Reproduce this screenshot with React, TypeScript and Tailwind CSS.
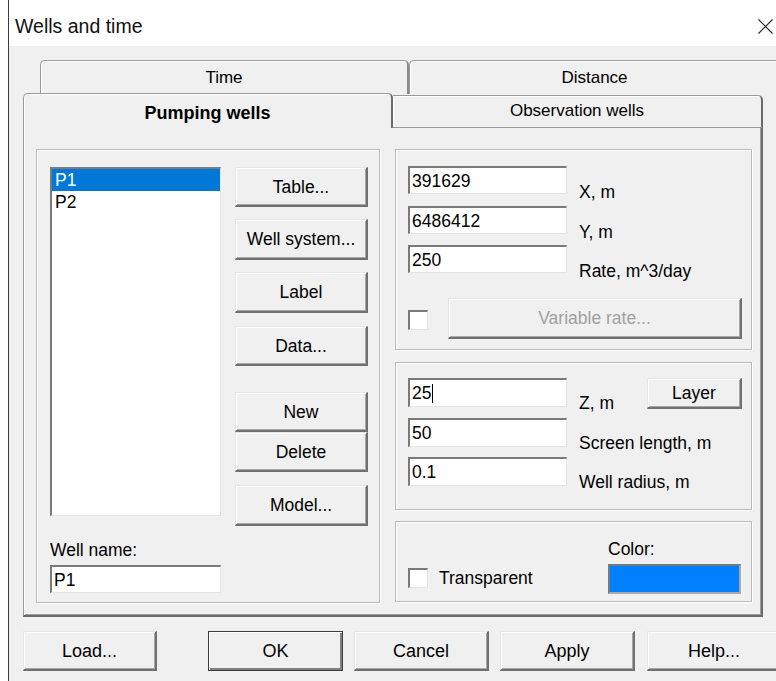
import React from 'react';
import clsx from 'clsx';

// classic raised / sunken bevels
const raised =
  'border-solid border-t border-l border-r-2 border-b-2 border-t-[#e6e6e6] border-l-[#e6e6e6] border-r-[#707070] border-b-[#707070] shadow-[inset_1px_1px_0_#ffffff,inset_-1px_-1px_0_#a8a8a8]';
const sunken =
  'border-solid border-t-2 border-l-2 border-r border-b border-t-[#7a7a7a] border-l-[#7a7a7a] border-r-[#e3e3e3] border-b-[#e3e3e3] bg-white';
const etched = 'border border-solid border-[#b9b9b9] shadow-[inset_1px_1px_0_#ffffff,1px_1px_0_#ffffff]';

const Button = ({
  label,
  className,
  disabled,
  isDefault,
}: {
  label: string;
  className?: string;
  disabled?: boolean;
  isDefault?: boolean;
}) => (
  <div
    className={clsx(
      'box-border flex shrink-0 items-center justify-center bg-[#f0f0f0] leading-[20px]',
      isDefault
        ? 'border border-solid border-[#3c3c3c] shadow-[inset_1px_1px_0_#ffffff,inset_-2px_-2px_0_#808080]'
        : raised,
      disabled ? 'text-[#a0a0a0]' : 'text-black',
      className
    )}
  >
    {label}
  </div>
);

const TextBox = ({ value, className, caret }: { value: string; className?: string; caret?: boolean }) => (
  <div className={clsx('box-border flex shrink-0 items-center pl-[2px] leading-[20px]', sunken, className)}>
    <span>{value}</span>
    {caret && <span className="ml-px inline-block h-[19px] w-px bg-black" />}
  </div>
);

const CheckBox = ({ className }: { className?: string }) => (
  <div className={clsx('box-border h-[20px] w-[20px] shrink-0', sunken, className)} />
);

const Field = ({
  value,
  label,
  gapTop,
  h = 'h-[28px]',
  labelTop = 'mt-[16px]',
  caret,
  children,
}: {
  value: string;
  label: string;
  gapTop: string;
  h?: string;
  labelTop?: string;
  caret?: boolean;
  children?: React.ReactNode;
}) => (
  <div className={clsx('flex items-start', h, gapTop)}>
    <TextBox value={value} caret={caret} className={clsx('w-[159px]', h)} />
    <span className={clsx('ml-[12px] leading-[20px] whitespace-nowrap', labelTop)}>{label}</span>
    {children}
  </div>
);

const BackTab = ({ label, className }: { label: string; className?: string }) => (
  <div
    className={clsx(
      'box-border flex h-[34px] shrink-0 justify-center rounded-t-[5px] border-solid border-t border-l border-r-2 border-t-[#9a9a9a] border-l-[#9a9a9a] border-r-[#8a8a8a] bg-[#f0f0f0] pt-[7px] leading-[20px] shadow-[inset_1px_1px_0_#ffffff]',
      className
    )}
  >
    {label}
  </div>
);

export default function App() {
  return (
    <div className="flex h-[681px] w-[776px] overflow-hidden bg-white font-['Liberation_Sans',Arial,sans-serif] text-[17.5px] text-black">
      <div className="w-[8px] shrink-0 bg-white" />
      <div className="w-px shrink-0 bg-[#3a3a3a]" />
      <div className="flex min-w-0 flex-1 flex-col">
        {/* title bar */}
        <div className="flex h-[46px] shrink-0 items-center bg-white pl-[6px] pt-[6px]">
          <span className="text-[19.5px] leading-[24px] text-[#111]">Wells and time</span>
          <svg className="ml-auto mr-[3px]" width="15" height="15" viewBox="0 0 15 15">
            <path d="M0.5 0.5 L14.5 14.5 M14.5 0.5 L0.5 14.5" stroke="#222" strokeWidth="1.1" fill="none" />
          </svg>
        </div>

        <div className="flex flex-1 flex-col bg-[#f0f0f0] pt-[14px]">
          {/* back row of tabs */}
          <div className="ml-[31px] flex h-[33px] overflow-visible">
            <BackTab label="Time" className="w-[369px] text-[17px]" />
            <BackTab label="Distance" className="w-[372px] text-[17px]" />
          </div>

          {/* front row of tabs */}
          <div className="relative z-10 ml-[14px] flex h-[34px] items-start">
            <div className="box-border flex h-[35px] w-[370px] shrink-0 justify-center rounded-t-[5px] border-solid border-t border-l border-r-2 border-t-[#9a9a9a] border-l-[#9a9a9a] border-r-[#6a6a6a] bg-[#f0f0f0] pt-[8px] text-[18px] font-bold leading-[22px] shadow-[inset_1px_1px_0_#ffffff]">
              Pumping wells
            </div>
            <div className="box-border mt-[2px] flex h-[33px] w-[370px] shrink-0 justify-center rounded-tr-[5px] border-solid border-t border-r-2 border-b border-t-[#9a9a9a] border-r-[#6a6a6a] border-b-[#9a9a9a] bg-[#f0f0f0] pt-[5px] text-[17px] leading-[20px] shadow-[inset_1px_1px_0_#ffffff]">
              Observation wells
            </div>
          </div>

          {/* page */}
          <div className="box-border ml-[14px] flex h-[490px] w-[740px] shrink-0 gap-[15px] border-solid border-l border-r-2 border-b-2 border-l-[#9a9a9a] border-r-[#6a6a6a] border-b-[#6a6a6a] pl-[12px] pt-[22px] shadow-[inset_1px_0_0_#ffffff,inset_-1px_-1px_0_#a0a0a0]">
            {/* well list */}
            <div className={clsx('box-border flex h-[454px] w-[344px] shrink-0 pl-[13px] pt-[17px]', etched)}>
              <div className="flex w-[171px] flex-col">
                <div className={clsx('box-border h-[349px] w-[171px] pt-0', sunken)}>
                  <div className="h-[22px] bg-[#0078d7] pl-[3px] leading-[22px] text-white">P1</div>
                  <div className="h-[22px] pl-[3px] leading-[22px]">P2</div>
                </div>
                <span className="mt-[24px] h-[20px] leading-[20px]">Well name:</span>
                <TextBox value="P1" className="mt-[5px] h-[28px] w-[171px]" />
              </div>
              <div className="ml-[14px] flex w-[133px] flex-col">
                <Button label="Table..." className="h-[40px]" />
                <Button label="Well system..." className="mt-[12px] h-[41px]" />
                <Button label="Label" className="mt-[12px] h-[41px]" />
                <Button label="Data..." className="mt-[13px] h-[40px]" />
                <Button label="New" className="mt-[26px] h-[40px]" />
                <Button label="Delete" className="h-[40px]" />
                <Button label="Model..." className="mt-[13px] h-[41px]" />
              </div>
            </div>

            {/* position, depth and colour */}
            <div className="flex w-[357px] shrink-0 flex-col">
              <div className={clsx('box-border flex h-[201px] flex-col pl-[12px] pt-[16px]', etched)}>
                <Field value="391629" label="X, m" gapTop="" />
                <Field value="6486412" label="Y, m" gapTop="mt-[12px]" />
                <Field value="250" label="Rate, m^3/day" gapTop="mt-[11px]" />
                <div className="mt-[25px] flex h-[41px] items-start">
                  <CheckBox className="mt-[12px]" />
                  <Button label="Variable rate..." disabled className="ml-[20px] h-[41px] w-[294px]" />
                </div>
              </div>

              <div className={clsx('box-border mt-[12px] flex h-[148px] flex-col pl-[12px] pr-[9px] pt-[15px]', etched)}>
                <Field value="25" label="Z, m" gapTop="" h="h-[29px]" labelTop="mt-[15px]" caret>
                  <Button label="Layer" className="ml-auto h-[31px] w-[95px]" />
                </Field>
                <Field value="50" label="Screen length, m" gapTop="mt-[11px]" h="h-[29px]" labelTop="mt-[15px]" />
                <Field value="0.1" label="Well radius, m" gapTop="mt-[10px]" h="h-[29px]" labelTop="mt-[15px]" />
              </div>

              <div className={clsx('box-border mt-[11px] flex h-[81px] pl-[12px] pr-[10px]', etched)}>
                <div className="mt-[45px] flex h-[21px] items-center">
                  <CheckBox />
                  <span className="ml-[11px] leading-[20px]">Transparent</span>
                </div>
                <div className="ml-auto flex w-[133px] flex-col pt-[17px]">
                  <span className="h-[20px] leading-[20px]">Color:</span>
                  <div className="box-border mt-[5px] h-[30px] w-[133px] border-solid border-2 border-t-[#7a7a7a] border-l-[#7a7a7a] border-r-[#a9a9a9] border-b-[#a9a9a9] bg-[#0080ff]" />
                </div>
              </div>
            </div>
          </div>

          {/* dialog buttons */}
          <div className="ml-[14px] mt-[14px] flex h-[40px] text-[18px]">
            <Button label="Load..." className="h-[40px] w-[134px]" />
            <Button label="OK" isDefault className="ml-[51px] h-[40px] w-[135px]" />
            <Button label="Cancel" className="ml-[11px] h-[40px] w-[135px]" />
            <Button label="Apply" className="ml-[11px] h-[40px] w-[135px]" />
            <Button label="Help..." className="ml-[12px] h-[40px] w-[135px]" />
          </div>
        </div>
      </div>
    </div>
  );
}
